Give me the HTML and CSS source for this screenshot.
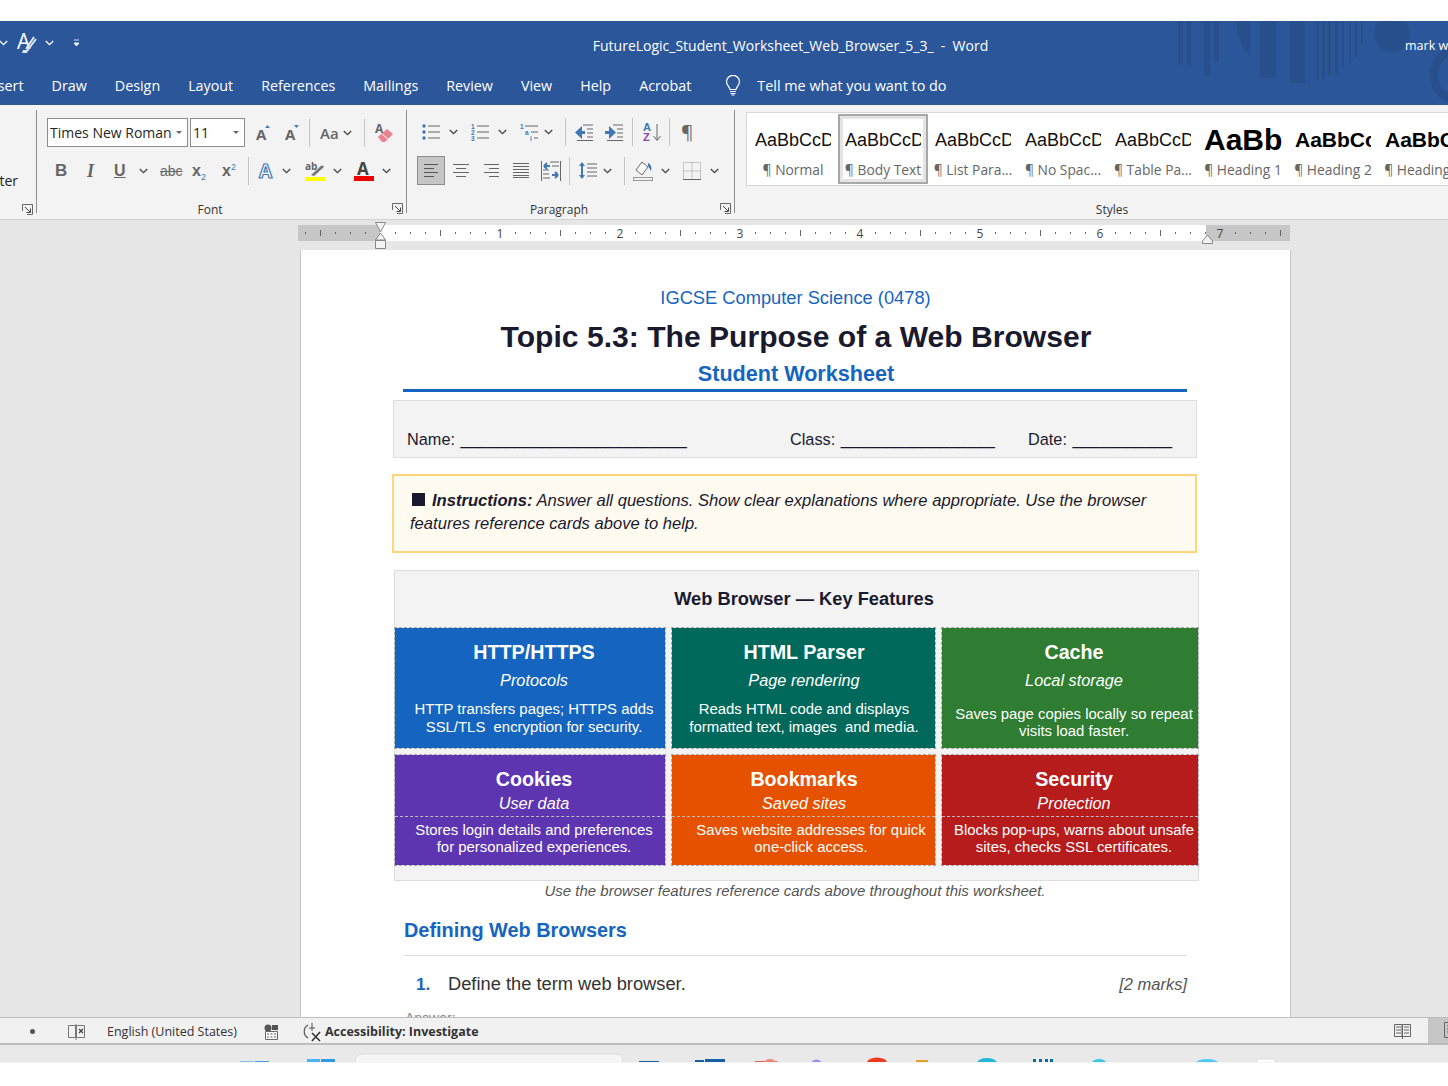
FILE: index.html
```html
<!DOCTYPE html>
<html lang="en">
<head>
<meta charset="utf-8">
<title>FutureLogic_Student_Worksheet_Web_Browser_5_3_ - Word</title>
<link rel="stylesheet" href="styles.css">
</head>
<body>
<svg class="defs" width="0" height="0" aria-hidden="true">
  <symbol id="chev" viewBox="0 0 9 6"><path d="M.8 1 4.5 4.7 8.2 1" fill="none" stroke="#444" stroke-width="1.3"/></symbol>
  <symbol id="launch" viewBox="0 0 11 11"><path d="M.5 7V.5h10V10.500H5" fill="none" stroke="#666"/><path d="M3 3l5 5M8.500 4.500v4h-4" fill="none" stroke="#444"/></symbol>
</svg>
<div class="topgap"></div>
<header class="blue">
  <svg class="art" width="300" height="84" viewBox="0 0 300 84" aria-hidden="true">
    <g fill="#274f8c">
      <rect x="30" width="5" height="44"/><rect x="39" width="4" height="44"/><rect x="56" width="6" height="55"/><rect x="66" width="5" height="41"/>
      <path d="M88 0h14v34C95 30 90 18 88 0z"/><rect x="112" width="16" height="57" /><rect x="142" width="15" height="62"/>
      <rect x="168" width="3" height="59"/><rect x="174" width="3" height="58"/><rect x="180" width="3" height="54"/><rect x="187" width="3" height="52"/><rect x="194" width="2" height="46"/><rect x="201" width="2" height="41"/><rect x="207" width="2" height="36"/><rect x="213" width="2" height="24"/>
      <circle cx="244" cy="13" r="18"/>
    </g>
    <circle cx="312" cy="54" r="26" fill="none" stroke="#274f8c" stroke-width="8"/>
  </svg>
  <div class="titlebar">
    <div class="qat">
      <svg width="9" height="6"><path d="M.8 1 4.500 4.700 8.200 1" fill="none" stroke="#fff" stroke-width="1.3"/></svg>
      <svg width="20" height="22" viewBox="0 0 20 22"><text x="0" y="17" class="qa">A</text><path d="M17 5 9 17M19 7l-9 12" stroke="#dfe6f1" stroke-width="2" fill="none"/><path d="M6 18h5l-1 3H5z" fill="#dfe6f1"/></svg>
      <svg width="9" height="6"><path d="M.8 1 4.500 4.700 8.200 1" fill="none" stroke="#fff" stroke-width="1.3"/></svg>
      <svg width="7" height="8"><path d="M1 1h5M1 4h5L3.500 7z" fill="#fff" stroke="#fff" stroke-width=".8"/></svg>
    </div>
    <div class="doc-title">FutureLogic_Student_Worksheet_Web_Browser_5_3_&nbsp; -&nbsp; Word</div>
    <div class="user">mark wa</div>
  </div>
  <nav class="tabs">
    <span class="tab-first">Insert</span><span>Draw</span><span>Design</span><span>Layout</span><span>References</span><span>Mailings</span><span>Review</span><span>View</span><span>Help</span><span>Acrobat</span>
    <span class="tell">
      <svg width="16" height="21" viewBox="0 0 16 21"><path d="M5 14.500C4 11 1.500 10 1.500 6.800a6.500 6.500 0 0 1 13 0c0 3.200-2.500 4.200-3.500 7.700z" fill="none" stroke="#fff" stroke-width="1.200"/><path d="M5 16.500h6M5.500 18.500h5M6.500 20h3" stroke="#fff"/></svg>
      Tell me what you want to do
    </span>
  </nav>
</header>

<section class="ribbon">
  <div class="group g-clip">
    <div class="clip-text"><span>Format Painter</span></div>
    <div class="glabel"><span></span><span></span><svg class="launcher" width="11" height="11"><use href="#launch"/></svg></div>
  </div>

  <div class="group g-font">
    <div class="tools font-r1">
      <div class="combo combo-font"><span>Times New Roman</span><b></b></div>
      <div class="combo combo-size"><span>11</span><b></b></div>
      <svg width="15" height="18" viewBox="0 0 15 18"><text x="0" y="16" class="ic-a">A</text><path d="M9 4l2.500-3L14 4z" fill="#4a7ebb"/></svg>
      <svg width="15" height="18" viewBox="0 0 15 18"><text x="0" y="16" class="ic-a">A</text><path d="M9 1l2.500 3L14 1z" fill="#4a7ebb"/></svg>
      <i class="sep"></i>
      <span class="aa">Aa</span>
      <svg width="9" height="6"><use href="#chev"/></svg>
      <i class="sep"></i>
      <svg width="19" height="20" viewBox="0 0 19 20"><text x="0" y="10" class="ic-b">A</text><path d="M3 14 12 6l6 5-8 8H7z" fill="#e8828f"/><path d="M7 11l6 5" stroke="#fff"/></svg>
    </div>
    <div class="tools font-r2">
      <b class="tg tb">B</b><i class="tg ti">I</i><span class="tg tu">U</span>
      <svg width="9" height="6"><use href="#chev"/></svg>
      <span class="tg tabc">abc</span>
      <span class="tg tx">x<sub>2</sub></span>
      <span class="tg tx">x<sup>2</sup></span>
      <i class="sep"></i>
      <svg width="18" height="20" viewBox="0 0 18 20"><text x="1" y="17" class="ic-glow">A</text></svg>
      <svg width="9" height="6"><use href="#chev"/></svg>
      <svg width="20" height="20" viewBox="0 0 20 20"><text x="0" y="9" class="ic-ab">ab</text><path d="M6 14 17 4l2 2L9 15z" fill="#777"/><rect y="16" width="20" height="4" fill="#ff0"/></svg>
      <svg width="9" height="6"><use href="#chev"/></svg>
      <svg width="20" height="20" viewBox="0 0 20 20"><text x="3" y="14" class="ic-fc">A</text><rect y="15" width="20" height="5" fill="#e00"/></svg>
      <svg width="9" height="6"><use href="#chev"/></svg>
    </div>
    <div class="glabel"><span></span><span class="gname">Font</span><svg class="launcher" width="11" height="11"><use href="#launch"/></svg></div>
  </div>

  <div class="group g-para">
    <div class="tools para-r1">
      <svg width="18" height="18" viewBox="0 0 18 18"><g fill="#3f78b5"><circle cx="2" cy="3" r="1.700"/><circle cx="2" cy="9" r="1.700"/><circle cx="2" cy="15" r="1.700"/></g><path d="M6 3h12M6 9h12M6 15h12" stroke="#666"/></svg>
      <svg width="9" height="6"><use href="#chev"/></svg>
      <svg width="18" height="18" viewBox="0 0 18 18"><text x="0" y="6" class="ic-n">1</text><text x="0" y="12" class="ic-n">2</text><text x="0" y="18" class="ic-n">3</text><path d="M6 3h12M6 9h12M6 15h12" stroke="#666"/></svg>
      <svg width="9" height="6"><use href="#chev"/></svg>
      <svg width="18" height="18" viewBox="0 0 18 18"><text x="0" y="6" class="ic-n">1</text><text x="5" y="12" class="ic-n">a</text><text x="10" y="18" class="ic-n">i</text><path d="M5 3h13M11 9h7M14 15h4" stroke="#666"/></svg>
      <svg width="9" height="6"><use href="#chev"/></svg>
      <i class="sep"></i>
      <svg width="18" height="17" viewBox="0 0 18 17"><path d="M7 2v13L0 8.500z" fill="#3f78b5"/><path d="M5 8.500h5" stroke="#3f78b5" stroke-width="3"/><path d="M8 1h10M12 5h6M12 9h6M12 13h6M2 16.500h16" stroke="#666"/></svg>
      <svg width="18" height="17" viewBox="0 0 18 17"><path d="M4 2v13l7-6.500z" fill="#3f78b5"/><path d="M0 8.500h5" stroke="#3f78b5" stroke-width="3"/><path d="M8 1h10M12 5h6M12 9h6M12 13h6M2 16.500h16" stroke="#666"/></svg>
      <i class="sep"></i>
      <svg width="18" height="19" viewBox="0 0 18 19"><text x="0" y="8" class="ic-az">A</text><text x="0" y="18" class="ic-az2">Z</text><path d="M14 1v16M10.500 13l3.500 4.500 3.500-4.500" fill="none" stroke="#666"/></svg>
      <i class="sep"></i>
      <span class="tg pilcrow">¶</span>
    </div>
    <div class="tools para-r2">
      <span class="active-align"><svg width="16" height="15" viewBox="0 0 16 15"><path d="M1 1.500h14M1 5.500h10M1 9.500h14M1 13.500h10" stroke="#555"/></svg></span>
      <svg width="16" height="15" viewBox="0 0 16 15"><path d="M0 1.500h16M3 5.500h10M0 9.500h16M3 13.500h10" stroke="#666"/></svg>
      <svg width="15" height="15" viewBox="0 0 15 15"><path d="M0 1.500h15M5 5.500h10M0 9.500h15M5 13.500h10" stroke="#666"/></svg>
      <svg width="16" height="15" viewBox="0 0 16 15"><path d="M0 .5h16M0 3.500h16M0 6.500h16M0 9.500h16M0 12.500h16M0 14.500h16" stroke="#666"/></svg>
      <svg width="20" height="20" viewBox="0 0 20 20"><path d="M.5 0v20M19.500 0v20M9 1h9M11 5h7M2 9h6M2 13h6M2 17h7" stroke="#666"/><path d="M3 5h6M3 5l3-3M3 5l3 3M11 14h6M17 14l-3-3M17 14l-3 3" fill="none" stroke="#3f78b5" stroke-width="2"/></svg>
      <i class="sep"></i>
      <svg width="18" height="19" viewBox="0 0 18 19"><path d="M3 1 0 5h6zM3 18l-3-4h6z" fill="#3f78b5"/><path d="M3 4v11" stroke="#3f78b5" stroke-width="2"/><path d="M8 3h10M8 7h10M8 11h10M8 15h10" stroke="#666"/></svg>
      <svg width="9" height="6"><use href="#chev"/></svg>
      <i class="sep"></i>
      <svg width="20" height="20" viewBox="0 0 20 20"><path d="M9 1l6 5-6 8-6-5z" fill="#fff" stroke="#666"/><path d="M15 2c3 1 4 5 3 8l-3-5z" fill="#3f78b5"/><rect x=".5" y="16.500" width="19" height="3" fill="#f3f3f3" stroke="#999"/></svg>
      <svg width="9" height="6"><use href="#chev"/></svg>
      <svg width="18" height="18" viewBox="0 0 18 18"><path d="M.5.5h17v17H.5zM9 .5v17M.5 9h17" fill="none" stroke="#999" stroke-dasharray="1 1"/><path d="M0 17.500h18" stroke="#666"/></svg>
      <svg width="9" height="6"><use href="#chev"/></svg>
    </div>
    <div class="glabel"><span></span><span class="gname">Paragraph</span><svg class="launcher" width="11" height="11"><use href="#launch"/></svg></div>
  </div>

  <div class="g-styles">
    <div class="gallery">
      <div class="style"><span class="prev">AaBbCcDd</span><span class="lab">¶ Normal</span></div>
      <div class="style selected"><span class="prev">AaBbCcDd</span><span class="lab">¶ Body Text</span></div>
      <div class="style"><span class="prev">AaBbCcDd</span><span class="lab">¶ List Para...</span></div>
      <div class="style"><span class="prev">AaBbCcDd</span><span class="lab">¶ No Spac...</span></div>
      <div class="style"><span class="prev">AaBbCcDd</span><span class="lab">¶ Table Pa...</span></div>
      <div class="style"><span class="prev h1">AaBb</span><span class="lab">¶ Heading 1</span></div>
      <div class="style"><span class="prev h2">AaBbCc</span><span class="lab">¶ Heading 2</span></div>
      <div class="style"><span class="prev h2">AaBbCc</span><span class="lab">¶ Heading 3</span></div>
    </div>
    <div class="styles-label">Styles</div>
  </div>
</section>

<div class="ruler-band">
  <svg class="ruler" width="992" height="30" viewBox="0 0 992 30" aria-label="Ruler">
    <defs>
      <pattern id="ticks" x="82" y="5" width="120" height="16" patternUnits="userSpaceOnUse">
        <g fill="#666"><rect x="15" y="7" width="1" height="2"/><rect x="30" y="7" width="1" height="2"/><rect x="45" y="7" width="1" height="2"/><rect x="60" y="5" width="1" height="6"/><rect x="75" y="7" width="1" height="2"/><rect x="90" y="7" width="1" height="2"/><rect x="105" y="7" width="1" height="2"/></g>
      </pattern>
    </defs>
    <rect y="5" width="992" height="16" fill="#c6c6c6"/>
    <rect x="82" y="5" width="826" height="16" fill="#fff"/>
    <rect y="5" width="992" height="16" fill="url(#ticks)"/>
    <g class="rnum"><text x="202" y="18">1</text><text x="322" y="18">2</text><text x="442" y="18">3</text><text x="562" y="18">4</text><text x="682" y="18">5</text><text x="802" y="18">6</text><text x="922" y="18">7</text></g>
    <path d="M77.500 2.500h10L82.500 12zM82.500 13l5 7h-10zM77.500 20.500h10v8h-10z" fill="#f3f3f3" stroke="#888"/>
    <path d="M909.500 15l5 6v2.500h-10V21z" fill="#f3f3f3" stroke="#888"/>
  </svg>
</div>

<main class="workspace">
  <article class="page">
    <p class="course">IGCSE Computer Science (0478)</p>
    <h1 class="title">Topic 5.3: The Purpose of a Web Browser</h1>
    <p class="subtitle">Student Worksheet</p>
    <hr class="rule">

    <div class="namebox">
      <span class="f-name">Name: _________________________</span>
      <span class="f-class">Class: _________________</span>
      <span class="f-date">Date: ___________</span>
    </div>

    <div class="instructions">
      <i class="square"></i><b>Instructions:</b> Answer all questions. Show clear explanations where appropriate. Use the browser features reference cards above to help.
    </div>

    <section class="features">
      <h2 class="features-head">Web Browser — Key Features</h2>
      <div class="cards">
        <div class="card c-blue"><h3>HTTP/HTTPS</h3><em>Protocols</em><p>HTTP transfers pages; HTTPS adds SSL/TLS&nbsp; encryption for security.</p></div>
        <div class="card c-teal"><h3>HTML Parser</h3><em>Page rendering</em><p>Reads HTML code and displays formatted text, images&nbsp; and media.</p></div>
        <div class="card c-green low"><h3>Cache</h3><em>Local storage</em><p>Saves page copies locally so repeat visits load faster.</p></div>
        <div class="card split c-purple"><div class="head"><h3>Cookies</h3><em>User data</em></div><p>Stores login details and preferences for personalized experiences.</p></div>
        <div class="card split c-orange"><div class="head"><h3>Bookmarks</h3><em>Saved sites</em></div><p>Saves website addresses for quick one-click access.</p></div>
        <div class="card split c-red"><div class="head"><h3>Security</h3><em>Protection</em></div><p>Blocks pop-ups, warns about unsafe sites, checks SSL certificates.</p></div>
      </div>
    </section>

    <p class="caption">Use the browser features reference cards above throughout this worksheet.</p>
    <h2 class="section">Defining Web Browsers</h2>
    <div class="question">
      <span class="qnum">1.</span>
      <span class="qtext">Define the term web browser.</span>
      <span class="marks">[2 marks]</span>
    </div>
    <p class="answer">Answer:</p>
  </article>
</main>

<footer class="status">
  <div class="status-left">
    <i class="dot"></i>
    <svg width="18" height="16" viewBox="0 0 18 16"><path d="M.5 1.500h7v12h-7zM8.500 1.500h8v12h-8zM8 0v16" fill="none" stroke="#777"/><path d="M11 5l4 4M15 5l-4 4" stroke="#444" stroke-width="1.300"/></svg>
    <span>English (United States)</span>
    <svg width="15" height="16" viewBox="0 0 15 16"><circle cx="4" cy="4" r="3.500" fill="#555"/><path d="M8 1h6v5H8z" fill="#555"/><path d="M1.500 7.500h12v8h-12z" fill="#fff" stroke="#666"/><path d="M3 10h2M6.500 10h2M10 10h2M3 13h2M6.500 13h2M10 13h2" stroke="#555"/></svg>
    <svg width="20" height="20" viewBox="0 0 20 20"><path d="M5 3a7.500 7.500 0 0 0 0 13" fill="none" stroke="#555" stroke-width="1.200"/><path d="M9 1v8M6 6h6" stroke="#555"/><path d="M9 11l8 8M17 10l-8 9" stroke="#333" stroke-width="1.600"/></svg>
    <b>Accessibility: Investigate</b>
  </div>
  <div class="status-right">
    <svg width="17" height="16" viewBox="0 0 17 16"><path d="M.5 1.500h7.500v12H.5zM8.500 1.500h8v12h-8z" fill="none" stroke="#666"/><path d="M2 4h5M2 7h5M2 10h5M10 4h5M10 7h5M10 10h5M8.500 13v3" stroke="#666"/></svg>
    <div class="view-active"><svg width="4" height="16" viewBox="0 0 4 16"><path d="M.5.5h15v15H.5zM3 4h10M3 7h10M3 10h10" fill="none" stroke="#666"/></svg></div>
  </div>
</footer>

<div class="taskbar">
  <svg width="1448" height="18" viewBox="0 0 1448 18" aria-hidden="true">
    <rect x="355" y="9" width="268" height="14" rx="7" fill="#f6f6f6" stroke="#ddd"/>
    <g>
      <rect x="240" y="16" width="14" height="2" fill="#7cc4ee"/>
      <rect x="255" y="16" width="14" height="2" fill="#4a9be0"/>
      <rect x="307" y="14" width="13" height="4" fill="#4ab4f0"/><rect x="321" y="14" width="14" height="4" fill="#2f9be6"/>
      <rect x="639" y="16" width="20" height="2" fill="#1560a8"/>
      <rect x="695" y="15" width="9" height="3" fill="#1560a8"/><rect x="705" y="14" width="20" height="4" fill="#1560a8"/>
      <rect x="755" y="16" width="22" height="2" fill="#e2604a"/>
      <path d="M764 18a6 4 0 0 1 12 0z" fill="#ee8877"/>
      <path d="M811 18a6 6 0 0 1 11 0z" fill="#9a8cf0"/>
      <path d="M867 18a9 5 0 0 1 20 0z" fill="#f03a1e"/>
      <rect x="916" y="15" width="12" height="3" fill="#e4a020"/>
      <path d="M977 18a10 5 0 0 1 20 0z" fill="#23b9d6"/>
      <path d="M1033 18v-4h3v4zM1039 18v-4h3v4zM1045 18v-4h3v4zM1050 18v-4h3v4z" fill="#0b6a9e"/>
      <path d="M1092 18a7 4 0 0 1 14 0z" fill="#3fc6ee"/>
      <path d="M1196 18a11 4 0 0 1 22 0z" fill="#4fc8f5"/>
      <rect x="1257" y="14" width="18" height="4" fill="#fff" stroke="#ddd"/>
    </g>
  </svg>
</div>
<div class="bottomgap"></div>
</body>
</html>
```

FILE: styles.css
```css
* { box-sizing: border-box; }
html, body { margin: 0; padding: 0; }
body {
  width: 1448px;
  height: 1086px;
  overflow: hidden;
  background: #fff;
  font-family: "Open Sans", "Noto Sans", sans-serif;
  color: #222;
}
.defs { position: absolute; }
svg { display: block; flex: none; }

.topgap { height: 21px; }
.blue { position: relative; height: 84px; background: #2b579a; color: #fff; overflow: hidden; }
.art { position: absolute; right: 0; top: 0; }
.titlebar { position: relative; height: 44px; display: flex; align-items: center; }
.qat { display: flex; align-items: center; width: 82px; margin-left: -1px; }
.qat svg:nth-child(1) { margin-right: 9px; }
.qat svg:nth-child(2) { margin-right: 8px; }
.qat svg:nth-child(3) { margin-right: 19px; }
.qa { font: 400 21px "Open Sans", sans-serif; fill: #fff; }
.doc-title { position: absolute; left: 133px; top: 15px; width: 1315px; text-align: center; font-size: 14px; line-height: 20px; }
.user { position: absolute; left: 1405px; font-size: 12.500px; white-space: nowrap; top: 16px; }
.tabs { position: relative; height: 40px; display: flex; align-items: center; gap: 28px; font-size: 14.300px; }
.tab-first { margin-left: -15px; }
.tell { display: flex; align-items: center; gap: 16px; margin-left: 6px; font-size: 14.400px; }

.ribbon { height: 115px; display: flex; background: #f3f3f3; border-bottom: 1px solid #d2d2d2; overflow: hidden; padding-top: 5px; }
.group { height: 103px; border-right: 1px solid #8e8e8e; padding-top: 8px; display: flex; flex-direction: column; flex: none; }
.g-clip { width: 37px; padding-top: 0; justify-content: space-between; }
.clip-text { display: flex; justify-content: flex-end; width: 18px; margin-top: 61px; font-size: 14px; line-height: 20px; white-space: nowrap; }
.g-font { width: 370px; padding-left: 10px; }
.g-para { width: 328px; }
.tools { display: grid; align-items: center; height: 29px; justify-items: start; }
.font-r1 { grid-template-columns: 143px 66px 29px 24px 11px 23px 21px 11px auto; }
.font-r2 { grid-template-columns: 32px 27px 25px 21px 32px 30px 26px 10px 24px 23px 28px 21px 28px auto; margin: 10px 0 0 8px; }
.para-r1 { grid-template-columns: 27px 22px 27px 22px 24px 21px 10px 30px 27px 11px 26px 12px auto; margin-left: 15px; }
.para-r2 { grid-template-columns: 36px 31px 29px 28px 28px 10px 24px 21px 9px 28px 22px 27px auto; margin: 10px 0 0 10px; }
.sep { display: block; width: 1px; height: 28px; background: #c6c6c6; }
.combo { display: flex; align-items: center; height: 29px; background: #fff; border: 1px solid #8e8e8e; font-size: 14px; padding-left: 2px; position: relative; color: #262626; }
.combo span { overflow: hidden; white-space: nowrap; flex: 1; }
.combo b { width: 0; height: 0; margin: 0 5px 0 3px; border: 3.500px solid transparent; border-top-color: #666; border-bottom: 0; }
.combo-font { width: 141px; }
.combo-size { width: 55px; }
.ic-a { font: 700 15px "Open Sans", sans-serif; fill: #666; }
.ic-b { font: 700 12px "Open Sans", sans-serif; fill: #666; }
.ic-glow { font: 700 19px "Open Sans", sans-serif; fill: #fff; stroke: #3f78b5; stroke-width: 1.200; }
.ic-ab { font: 700 10px "Open Sans", sans-serif; fill: #666; }
.ic-fc { font: 700 17px "Open Sans", sans-serif; fill: #444; }
.ic-n { font: 700 6.500px "Liberation Sans", sans-serif; fill: #3f78b5; }
.ic-az { font: 700 11px "Liberation Sans", sans-serif; fill: #3f78b5; }
.ic-az2 { font: 700 11px "Liberation Sans", sans-serif; fill: #8e44ad; }
.aa { font-size: 15px; font-weight: 600; color: #666; }
.tg { font-size: 15px; color: #666; line-height: 20px; display: block; font-style: normal; }
.tb { font-weight: 700; font-family: "Liberation Sans", sans-serif; font-size: 17px; }
.ti { font: italic 700 18px "Liberation Serif", serif; }
.tu { font-weight: 700; font-size: 16px; text-decoration: underline; font-family: "Liberation Sans", sans-serif; }
.tabc { font-size: 14px; text-decoration: line-through; font-family: "Liberation Sans", sans-serif; }
.tx { font-weight: 700; font-size: 16px; font-family: "Liberation Sans", sans-serif; }
.tx sub, .tx sup { font-size: 9px; color: #3f78b5; font-weight: 400; line-height: 0; }
.pilcrow { font-size: 19px; font-weight: 400; }
.active-align { display: flex; align-items: center; justify-content: center; width: 28px; height: 29px; background: #c6c6c6; border: 1px solid #8e8e8e; }
.glabel { display: grid; grid-template-columns: 1fr auto 1fr; font-size: 12px; line-height: 14px; height: 14px; margin-top: 18px; padding-right: 3px; color: #333; align-items: center; flex: none; }
.gname { margin-right: 20px; }
.launcher { justify-self: end; margin-top: -4px; }
.g-clip .glabel { margin-top: 0; margin-bottom: -5px; }
.g-font .glabel { margin-left: -10px; }

.g-styles { margin-left: 11px; flex: 1; min-width: 0; }
.gallery { margin-top: 2px; height: 74px; display: grid; grid-template-columns: repeat(8, 90px); background: #fff; border: 1px solid #d8d8d8; padding-left: 1px; width: 800px; overflow: hidden; }
.style { height: 72px; display: flex; flex-direction: column; align-items: center; overflow: hidden; padding-top: 10px; }
.selected { border: 2px solid #a8a8a8; outline: 3px solid #e4e4e4; outline-offset: -5px; margin-top: 1px; height: 70px; padding-top: 7px; }
.prev { width: 76px; overflow: hidden; white-space: nowrap; font: 18px/34px "Liberation Sans", sans-serif; height: 34px; color: #111; flex: none; }
.prev.h1 { font-size: 30px; font-weight: 700; color: #000; width: 78px; }
.prev.h2 { font-size: 21px; font-weight: 700; color: #000; }
.lab { font-size: 13.800px; line-height: 18px; margin-top: 4px; color: #666; white-space: nowrap; }
.styles-label { text-align: center; font-size: 12px; line-height: 14px; margin-top: 17px; width: 732px; color: #333; }

.ruler-band { height: 30px; background: #e6e6e6; padding-left: 298px; }
.rnum text { font: 12px "Open Sans", sans-serif; fill: #444; text-anchor: middle; }
.workspace { height: 767px; background: #e6e6e6; padding-left: 300px; overflow: hidden; }
.page { width: 991px; height: 767px; background: #fff; border: 1px solid #c6c6c6; border-width: 0 1px; padding: 37px 103px 0 102px; overflow: hidden; font-family: "Liberation Sans", Arial, sans-serif; color: #1a1a2e; }
.course { margin: 0; text-align: center; font-size: 18.300px; line-height: 21px; color: #1565c0; padding-left: 1px; }
.title { margin: 11px 0 0; text-align: center; font-size: 30.100px; line-height: 36px; font-weight: 700; padding-left: 2px; }
.subtitle { margin: 6px 0 0; text-align: center; font-size: 21.600px; line-height: 26px; font-weight: 700; color: #1565c0; padding-left: 2px; }
.rule { margin: 2px 0 0; border: 0; height: 3px; background: #1565c0; }
.namebox { margin: 8px -10px 0; height: 58px; background: #f3f3f3; border: 1px solid #ddd; padding: 0 0 8px 13px; display: flex; align-items: flex-end; font-size: 16.300px; line-height: 20px; white-space: nowrap; word-spacing: 1px; }
.f-name { width: 383px; }
.f-class { width: 238px; }
.instructions { margin: 16px -10px 0 -11px; height: 79px; background: #fffbf0; border: 2px solid #ffd67a; padding: 13px 16px 0; font-size: 16.600px; line-height: 23px; font-style: italic; }
.square { display: inline-block; width: 13px; height: 13px; background: #1a1a2e; margin: 0 7px 0 2px; }
.features { margin: 17px -12px 0 -9px; height: 311px; background: #f3f3f3; border: 1px solid #ddd; }
.features-head { margin: 0; height: 56px; display: flex; align-items: center; justify-content: center; font-size: 18.300px; padding-left: 15px; }
.cards { display: grid; grid-template-columns: 272px 265px 258px; grid-template-rows: 122px 112px; gap: 5px; margin-left: -1px; }
.card { --inset: 8px; color: #fff; text-align: center; border: 1px dashed #aaa; background-clip: padding-box; padding-top: 11px; }
.c-teal, .c-orange { --inset: 1px; }
.card h3 { margin: 0; padding-left: var(--inset); font-size: 19.700px; line-height: 26px; }
.card em { display: block; margin-top: 4px; padding-left: var(--inset); font-size: 16.300px; line-height: 22px; }
.card p { margin: 9px 0 0; padding-left: var(--inset); font-size: 14.900px; line-height: 18px; }
.low p { margin-top: 15px; line-height: 17px; }
.split { padding-top: 12px; }
.split h3 { line-height: 24px; }
.split em { margin-top: 1px; }
.split .head { height: 50px; border-bottom: 1px dashed #bbb; }
.split p { margin-top: 5px; line-height: 17px; }
.c-purple p { padding: 0 8px 0 16px; }
.c-orange p { padding-left: 15px; }
.c-blue { background-color: #1565c0; }
.c-teal { background-color: #00695c; }
.c-green { background-color: #2e7d32; }
.c-purple { background-color: #5e35b1; }
.c-orange { background-color: #e65100; }
.c-red { background-color: #b71c1c; }
.caption { margin: 0; text-align: center; font-size: 15px; line-height: 20px; font-style: italic; color: #555; }
.section { margin: 16px 0 0; font-size: 19.900px; line-height: 26px; color: #1565c0; padding-left: 1px; }
.question { margin-top: 12px; padding: 17px 0 0 13px; border-top: 1px solid #ddd; display: flex; align-items: baseline; }
.qnum { width: 32px; font-weight: 700; font-size: 17px; color: #1565c0; }
.qtext { flex: 1; font-size: 18.300px; line-height: 22px; color: #333; }
.marks { font-size: 16.500px; font-style: italic; color: #555; }
.answer { margin: 15px 0 0 2px; font-size: 14px; color: #888; }

.status { height: 28px; background: #f1f1f1; border-top: 1px solid #bdbdbd; border-bottom: 2px solid #bdbdbd; display: flex; justify-content: space-between; font-size: 12.500px; color: #333; }
.status-left { display: grid; grid-template-columns: 38px 39px 157px 39px 22px auto; align-items: center; padding: 2px 0 0 30px; }
.status-left b { font-size: 12.500px; }
.dot { display: block; width: 5px; height: 5px; border-radius: 50%; background: #555; }
.status-right { display: flex; align-items: center; gap: 17px; }
.view-active { width: 20px; height: 25px; background: #c6c6c6; padding: 4px 0 0 16px; overflow: hidden; }
.taskbar { height: 18px; background: #e9e9e9; overflow: hidden; border-bottom: 1px solid #f4f4f4; }
.bottomgap { height: 23px; }
```
